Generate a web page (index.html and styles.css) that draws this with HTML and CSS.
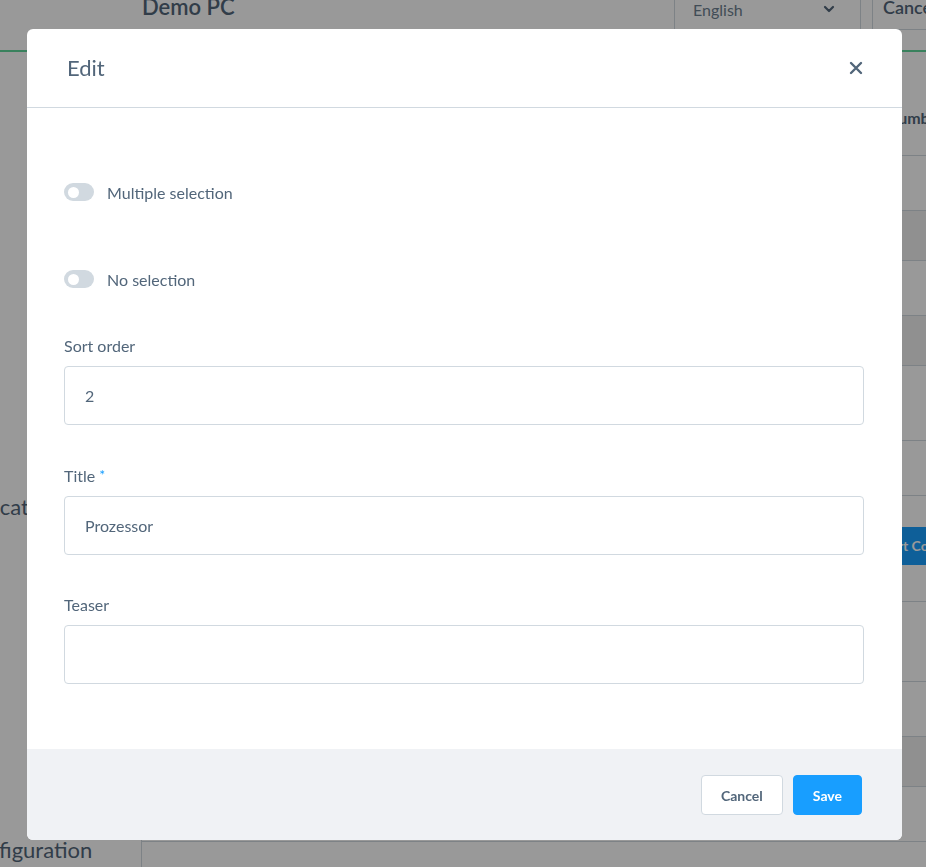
FILE: index.html
```html
<!DOCTYPE html>
<html lang="en">

<head>
    <meta charset="UTF-8">
    <meta name="viewport" content="width=device-width, initial-scale=1.0">
    <title>Edit option</title>
    <link rel="stylesheet" href="styles.css">
</head>

<body>
    <div class="page">
        <header class="topbar">
            <div class="topbar-title">Demo PC</div>
            <div class="topbar-actions">
                <div class="lang-select">
                    <span>English</span>
                    <svg width="14" height="14" viewBox="0 0 14 14"><path d="M3 5l4 4 4-4" fill="none" stroke="#52667a" stroke-width="2.2" stroke-linecap="round" stroke-linejoin="round"/></svg>
                </div>
                <div class="top-btn">Cancel</div>
            </div>
        </header>

        <div class="content">
            <aside class="sidebar">
                <div class="side-item side-categories">Product categories</div>
                <div class="side-item side-config">Configuration</div>
            </aside>
            <main class="main">
                <div class="grid-head">Number</div>
                <div class="grid-row"></div>
                <div class="grid-row striped"></div>
                <div class="grid-row"></div>
                <div class="grid-row striped"></div>
                <div class="grid-row row-75"></div>
                <div class="grid-row"></div>
                <div class="grid-row row-action">
                    <span class="start-btn">Start Configuration</span>
                </div>
                <div class="grid-row row-80"></div>
                <div class="grid-row"></div>
                <div class="grid-row striped"></div>
                <div class="grid-row"></div>
            </main>
        </div>
    </div>

    <div class="overlay">
        <div class="modal">
            <div class="modal-header">
                <h2>Edit</h2>
                <button class="modal-close" type="button" aria-label="Close">
                    <svg width="14" height="14" viewBox="0 0 14 14"><path d="M2 2l10 10M12 2L2 12" stroke="#52667a" stroke-width="2.4" stroke-linecap="round"/></svg>
                </button>
            </div>

            <div class="modal-body">
                <div class="switches">
                    <label class="switch-field">
                        <span class="switch"><span class="knob"></span></span>
                        Multiple selection
                    </label>
                    <label class="switch-field">
                        <span class="switch"><span class="knob"></span></span>
                        No selection
                    </label>
                </div>

                <div class="field">
                    <label for="sortOrder">Sort order</label>
                    <input type="text" id="sortOrder" value="2">
                </div>
                <div class="field">
                    <label for="title">Title <span class="required">*</span></label>
                    <input type="text" id="title" value="Prozessor">
                </div>
                <div class="field">
                    <label for="teaser">Teaser</label>
                    <input type="text" id="teaser" value="">
                </div>
            </div>

            <div class="modal-footer">
                <button type="button" class="btn btn-cancel">Cancel</button>
                <button type="button" class="btn btn-save">Save</button>
            </div>
        </div>
    </div>
</body>

</html>
```

FILE: styles.css
```css
/* styles.css */
body {
    margin: 0;
    font-family: Lato, "Noto Sans", sans-serif;
    color: #52667a;
    background: #fff;
    overflow: hidden;
    height: 867px;
}

/* background page */
.topbar {
    display: flex;
    justify-content: space-between;
    height: 50px;
    border-bottom: 2px solid #5fd79b;
}

.topbar-title {
    margin: -7px 0 0 142px;
    font-size: 22px;
    font-weight: 600;
    color: #52667a;
}

.topbar-actions {
    display: flex;
    gap: 11px;
    margin: -12px -28px 0 0;
}

.lang-select {
    display: flex;
    justify-content: space-between;
    align-items: center;
    width: 143px;
    height: 40px;
    padding: 0 24px 0 18px;
    border: 1px solid #d1d9e0;
    font-size: 16px;
    color: #6d7f90;
}

.top-btn {
    height: 40px;
    padding: 0 10px;
    line-height: 36px;
    border: 1px solid #d1d9e0;
    font-size: 18px;
    font-weight: 600;
    width: 60px;
    overflow: hidden;
}

.content {
    display: flex;
    height: 815px;
}

.sidebar {
    flex-shrink: 0;
    width: 141px;
    border-right: 1px solid #d1d9e0;
    overflow: hidden;
}

.side-item {
    font-size: 22px;
    white-space: nowrap;
    color: #52667a;
}

.side-categories {
    margin: 441px 0 0 -82px;
}

.side-config {
    margin: 316px 0 0 -40px;
}

.main {
    flex: 1;
    min-width: 0;
}

.grid-head {
    height: 104px;
    padding: 56px 0 0 744px;
    box-sizing: border-box;
    font-weight: 700;
    font-size: 16px;
    white-space: nowrap;
    border-bottom: 1px solid #d1d9e0;
}

.grid-row {
    height: 54px;
    border-bottom: 1px solid #d1d9e0;
}

.grid-row.striped {
    height: 49px;
    background: #f0f0f0;
}

.grid-row.row-75 {
    height: 74px;
}

.grid-row.row-action {
    height: 106px;
    padding-top: 31px;
    box-sizing: border-box;
}

.grid-row.row-80 {
    height: 79px;
}

.start-btn {
    display: inline-block;
    margin-left: 720px;
    padding: 0 16px;
    height: 38px;
    line-height: 38px;
    background: #189eff;
    color: #fff;
    font-weight: 700;
    font-size: 14px;
    white-space: nowrap;
    border-radius: 4px;
}

/* modal */
.overlay {
    position: fixed;
    inset: 0;
    background: rgba(0, 0, 0, 0.4);
    padding: 29px 0 0 27px;
}

.modal {
    width: 875px;
    background: #fff;
    border-radius: 6px;
    overflow: hidden;
}

.modal-header {
    display: flex;
    justify-content: space-between;
    align-items: center;
    height: 78px;
    padding: 0 35px 0 40px;
    border-bottom: 1px solid #d1d9e0;
}

.modal-header h2 {
    margin: -2px 0 0;
    font-size: 22px;
    font-weight: 400;
    color: #52667a;
}

.modal-close {
    border: none;
    background: none;
    padding: 4px;
    display: flex;
    cursor: pointer;
}

.modal-body {
    padding: 75px 38px 65px 37px;
}

.switches {
    display: flex;
    flex-direction: column;
    gap: 69px;
    margin-bottom: 48px;
}

.switch-field {
    display: flex;
    align-items: center;
    gap: 13px;
    height: 18px;
    font-size: 16px;
}

.switch {
    display: flex;
    align-items: center;
    width: 30px;
    height: 18px;
    border-radius: 9px;
    background: #d1d9e0;
    box-sizing: border-box;
    padding-left: 4px;
}

.knob {
    width: 11px;
    height: 11px;
    border-radius: 50%;
    background: #fff;
}

.field {
    margin-bottom: 40px;
}

.field:last-child {
    margin-bottom: 0;
}

.field label {
    display: block;
    font-size: 16px;
    line-height: 20px;
    margin-bottom: 10px;
}

.required {
    color: #189eff;
    font-size: 14px;
    vertical-align: 2px;
}

.field input {
    width: 100%;
    height: 59px;
    box-sizing: border-box;
    padding: 0 20px;
    border: 1px solid #d1d9e0;
    border-radius: 4px;
    font-family: inherit;
    font-size: 16px;
    color: #52667a;
    outline: none;
}

.modal-footer {
    display: flex;
    justify-content: flex-end;
    gap: 10px;
    height: 91px;
    box-sizing: border-box;
    padding: 26px 40px 0 0;
    background: #f0f2f5;
}

.btn {
    height: 40px;
    padding: 0 19px;
    border-radius: 4px;
    font-family: inherit;
    font-size: 14px;
    font-weight: 700;
    cursor: pointer;
}

.btn-cancel {
    background: #fff;
    border: 1px solid #d1d9e0;
    color: #52667a;
}

.btn-save {
    background: #189eff;
    border: 1px solid #189eff;
    color: #fff;
}
```
